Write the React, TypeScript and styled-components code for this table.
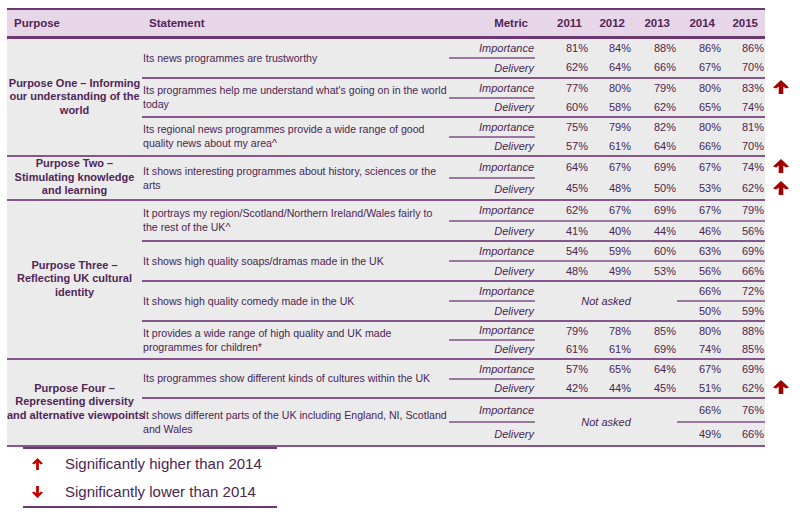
import React from 'react';
import styled, { createGlobalStyle } from 'styled-components';

const GlobalStyle = createGlobalStyle`
  body {
    margin: 0;
    background: #ffffff;
    font-family: 'Liberation Sans', Arial, sans-serif;
    color: #4a2653;
  }
`;

type Stmt = {
  text: string[];
  imp: string[];
  del: string[];
  h?: [number, number];
  full?: boolean;
  notAsked?: boolean;
  up?: [boolean, boolean];
};

type Group = { label: string[]; stmts: Stmt[] };

const groups: Group[] = [
  {
    label: ['Purpose One – Informing', 'our understanding of the', 'world'],
    stmts: [
      {
        text: ['Its news programmes are trustworthy'],
        imp: ['81%', '84%', '88%', '86%', '86%'],
        del: ['62%', '64%', '66%', '67%', '70%'],
        h: [20, 20],
      },
      {
        text: ["Its programmes help me understand what's going on in the world", 'today'],
        imp: ['77%', '80%', '79%', '80%', '83%'],
        del: ['60%', '58%', '62%', '65%', '74%'],
        h: [20, 19],
        up: [true, false],
      },
      {
        text: ['Its regional news programmes provide a wide range of good', 'quality news about my area^'],
        imp: ['75%', '79%', '82%', '80%', '81%'],
        del: ['57%', '61%', '64%', '66%', '70%'],
        h: [20, 19],
      },
    ],
  },
  {
    label: ['Purpose Two –', 'Stimulating knowledge', 'and learning'],
    stmts: [
      {
        text: ['It shows interesting programmes about history, sciences or the', 'arts'],
        imp: ['64%', '67%', '69%', '67%', '74%'],
        del: ['45%', '48%', '50%', '53%', '62%'],
        h: [22, 22],
        up: [true, true],
      },
    ],
  },
  {
    label: ['Purpose Three –', 'Reflecting UK cultural', 'identity'],
    stmts: [
      {
        text: ['It portrays my region/Scotland/Northern Ireland/Wales fairly to', 'the rest of the UK^'],
        imp: ['62%', '67%', '69%', '67%', '79%'],
        del: ['41%', '40%', '44%', '46%', '56%'],
        h: [21, 20],
        full: true,
      },
      {
        text: ['It shows high quality soaps/dramas made in the UK'],
        imp: ['54%', '59%', '60%', '63%', '69%'],
        del: ['48%', '49%', '53%', '56%', '66%'],
        h: [20, 20],
        full: true,
      },
      {
        text: ['It shows high quality comedy made in the UK'],
        imp: ['66%', '72%'],
        del: ['50%', '59%'],
        h: [20, 20],
        notAsked: true,
      },
      {
        text: ['It provides a wide range of high quality and UK made', 'programmes for children*'],
        imp: ['79%', '78%', '85%', '80%', '88%'],
        del: ['61%', '61%', '69%', '74%', '85%'],
        h: [19, 19],
      },
    ],
  },
  {
    label: ['Purpose Four –', 'Representing diversity', 'and alternative viewpoints'],
    stmts: [
      {
        text: ['Its programmes show different kinds of cultures within the UK'],
        imp: ['57%', '65%', '64%', '67%', '69%'],
        del: ['42%', '44%', '45%', '51%', '62%'],
        h: [20, 19],
        up: [false, true],
      },
      {
        text: ['It shows different parts of the UK including England, NI, Scotland', 'and Wales'],
        imp: ['66%', '76%'],
        del: ['49%', '66%'],
        h: [24, 24],
        notAsked: true,
      },
    ],
  },
];

const years = ['2011', '2012', '2013', '2014', '2015'];

const LINE = '#85568b';
const DIVIDER = '#9a779f';
const DARK = '#6c3872';
const GREY = '#ebebeb';

const Page = styled.div`
  padding: 8px 0 0 7px;
`;

const Table = styled.table`
  border-collapse: collapse;
  table-layout: fixed;
  width: 793px;
  font-size: 11px;
`;

const HeadCell = styled.th<{ $right?: boolean }>`
  height: 26px;
  padding: 0 7px;
  background: #e7d5e8;
  border-top: 2px solid ${DARK};
  border-bottom: 3px solid ${DARK};
  text-align: ${p => (p.$right ? 'right' : 'left')};
  font-size: 11.5px;
  font-weight: bold;
  color: #512657;
`;

const BlankHead = styled.th`
  border: none;
  background: transparent;
`;

const Row = styled.tr<{ $h: number }>`
  height: ${p => p.$h}px;
`;

const BodyCell = styled.td<{ $line?: 'group' | 'stmt' | 'split' | 'none' }>`
  background: ${GREY};
  padding: 0;
  vertical-align: middle;
  border-bottom: ${p =>
    p.$line === 'group' || p.$line === 'stmt'
      ? `2px solid ${LINE}`
      : p.$line === 'split'
      ? `2px solid ${DIVIDER}`
      : 'none'};
`;

const PurposeCell = styled(BodyCell)`
  text-align: center;
  font-weight: bold;
  font-size: 11px;
  line-height: 13.5px;
  white-space: nowrap;
  color: #512657;
`;

const StatementCell = styled(BodyCell)`
  padding-left: 1px;
  font-size: 10.6px;
  line-height: 14px;
  white-space: nowrap;
`;

const MetricCell = styled(BodyCell)`
  text-align: right;
  font-style: italic;
  padding-right: 1px;
`;

const ValueCell = styled(BodyCell)`
  text-align: right;
  padding-right: 1px;
`;

const NotAskedCell = styled(BodyCell)`
  text-align: center;
  font-style: italic;
`;

const ArrowCell = styled.td`
  padding: 0 0 0 8px;
  vertical-align: middle;
  background: transparent;
`;

const Legend = styled.div`
  margin-left: 16px;
  width: 254px;
  border-top: 2px solid ${DARK};
  border-bottom: 2px solid ${DARK};
  padding: 1px 0 0;
`;

const LegendItem = styled.div`
  display: flex;
  align-items: center;
  height: 28px;
  font-size: 15px;
  color: #4a2653;
`;

const LegendIcon = styled.span`
  display: flex;
  width: 42px;
  padding-left: 9px;
  box-sizing: border-box;
`;

const BigUp = () => (
  <svg width="16" height="14" viewBox="0 0 16 14">
    <path d="M8 0 L16 7.6 L12.8 8.6 L10.3 6.4 L10.3 14 L5.7 14 L5.7 6.4 L3.2 8.6 L0 7.6 Z" fill="#a30000" />
  </svg>
);

const SmallArrow = ({ down }: { down?: boolean }) => (
  <svg width="11" height="12" viewBox="0 0 11 12" style={down ? { transform: 'rotate(180deg)' } : undefined}>
    <path d="M5.5 0 L11 5.6 L8.8 6.5 L6.9 4.8 L6.9 12 L4.1 12 L4.1 4.8 L2.2 6.5 L0 5.6 Z" fill="#c40000" />
  </svg>
);

const Lines = ({ lines }: { lines: string[] }) => (
  <>
    {lines.map((l, i) => (
      <React.Fragment key={i}>
        {i > 0 && <br />}
        {l}
      </React.Fragment>
    ))}
  </>
);

const GroupRows = ({ group }: { group: Group }) => {
  const span = group.stmts.length * 2;
  return (
    <>
      {group.stmts.map((s, si) => {
        const last = si === group.stmts.length - 1;
        const end = last ? 'group' : 'stmt';
        const h = s.h || [20, 20];
        const impLine = s.full ? 'split' : 'none';
        return (
          <React.Fragment key={si}>
            <Row $h={h[0]}>
              {si === 0 && (
                <PurposeCell rowSpan={span} $line="group">
                  <Lines lines={group.label} />
                </PurposeCell>
              )}
              <StatementCell rowSpan={2} $line={end}>
                <Lines lines={s.text} />
              </StatementCell>
              <MetricCell $line="split">Importance</MetricCell>
              {s.notAsked ? (
                <>
                  <NotAskedCell rowSpan={2} colSpan={3} $line={end}>
                    Not asked
                  </NotAskedCell>
                  {s.imp.map((v, i) => (
                    <ValueCell key={i} $line="split">
                      {v}
                    </ValueCell>
                  ))}
                </>
              ) : (
                s.imp.map((v, i) => (
                  <ValueCell key={i} $line={impLine}>
                    {v}
                  </ValueCell>
                ))
              )}
              <ArrowCell>{s.up && s.up[0] && <BigUp />}</ArrowCell>
            </Row>
            <Row $h={h[1]}>
              <MetricCell $line={end}>Delivery</MetricCell>
              {s.del.map((v, i) => (
                <ValueCell key={i} $line={end}>
                  {v}
                </ValueCell>
              ))}
              <ArrowCell>{s.up && s.up[1] && <BigUp />}</ArrowCell>
            </Row>
          </React.Fragment>
        );
      })}
    </>
  );
};

export default function App() {
  return (
    <Page>
      <GlobalStyle />
      <Table>
        <colgroup>
          <col style={{ width: 135 }} />
          <col style={{ width: 307 }} />
          <col style={{ width: 86 }} />
          <col style={{ width: 54 }} />
          <col style={{ width: 43 }} />
          <col style={{ width: 45 }} />
          <col style={{ width: 45 }} />
          <col style={{ width: 43 }} />
          <col style={{ width: 35 }} />
        </colgroup>
        <thead>
          <tr>
            <HeadCell>Purpose</HeadCell>
            <HeadCell>Statement</HeadCell>
            <HeadCell $right>Metric</HeadCell>
            {years.map(y => (
              <HeadCell key={y} $right>
                {y}
              </HeadCell>
            ))}
            <BlankHead />
          </tr>
        </thead>
        <tbody>
          {groups.map((g, i) => (
            <GroupRows key={i} group={g} />
          ))}
        </tbody>
      </Table>
      <Legend>
        <LegendItem>
          <LegendIcon>
            <SmallArrow />
          </LegendIcon>
          Significantly higher than 2014
        </LegendItem>
        <LegendItem>
          <LegendIcon>
            <SmallArrow down />
          </LegendIcon>
          Significantly lower than 2014
        </LegendItem>
      </Legend>
    </Page>
  );
}
